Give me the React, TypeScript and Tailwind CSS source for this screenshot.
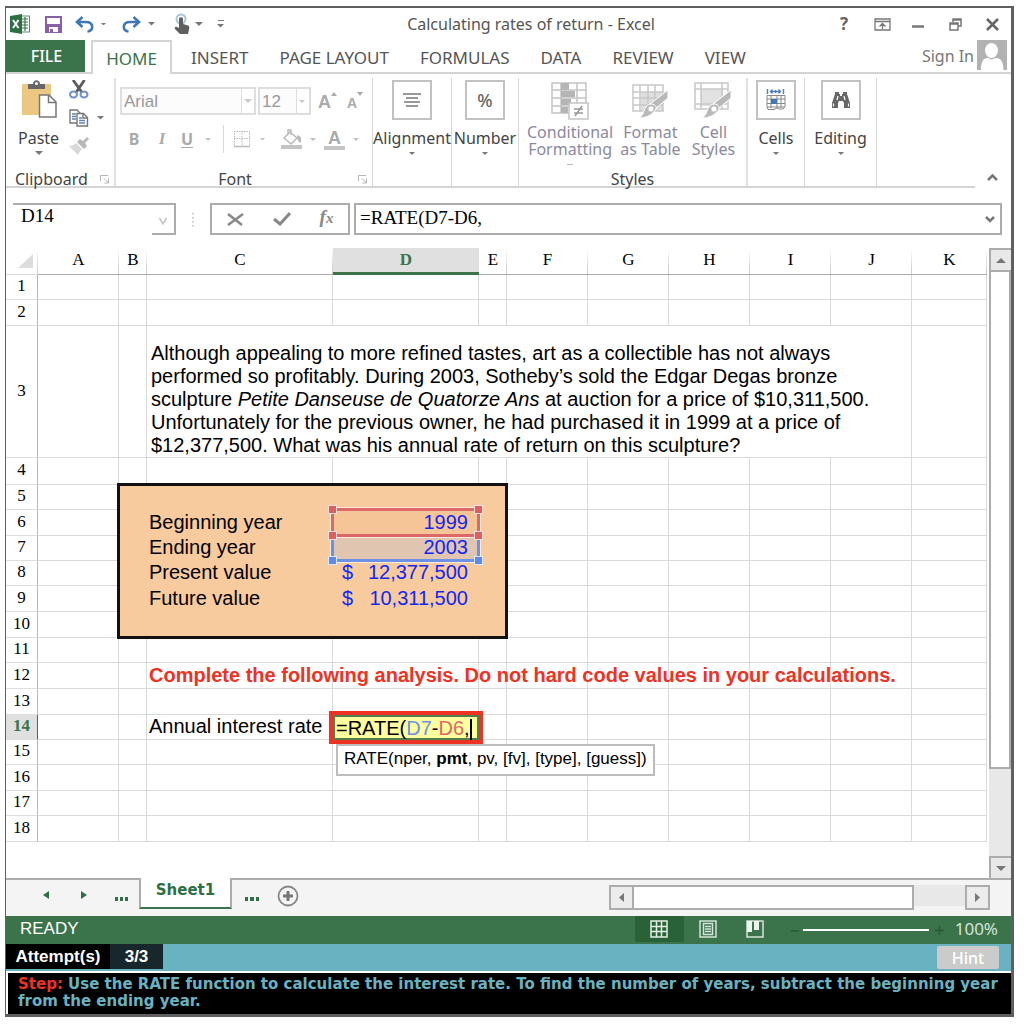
import React from 'react';

const COLUMNS = ['A', 'B', 'C', 'D', 'E', 'F', 'G', 'H', 'I', 'J', 'K'];

const TABS = ['INSERT', 'PAGE LAYOUT', 'FORMULAS', 'DATA', 'REVIEW', 'VIEW'];

// [row number, height class]
const ROWS: [number, string][] = [
  [1, 'h-[25px]'],
  [2, 'h-[26px]'],
  [3, 'h-[132px]'],
  [4, 'h-[27px]'],
  [5, 'h-[25px]'],
  [6, 'h-[26px]'],
  [7, 'h-[25px]'],
  [8, 'h-[25px]'],
  [9, 'h-[26px]'],
  [10, 'h-[26px]'],
  [11, 'h-[25px]'],
  [12, 'h-[26px]'],
  [13, 'h-[26px]'],
  [14, 'h-[25px]'],
  [15, 'h-[25px]'],
  [16, 'h-[26px]'],
  [17, 'h-[25px]'],
  [18, 'h-[26px]'],
];

const Caret = ({ className = 'text-[#777]', size = 8 }: { className?: string; size?: number }) => (
  <svg width={size} height={size / 2} viewBox="0 0 8 4" className={className} fill="currentColor">
    <path d="M0 0h8L4 4z" />
  </svg>
);

const Launcher = () => (
  <svg width="10" height="9" viewBox="0 0 10 9" fill="none" stroke="#b5b5b5">
    <path d="M.5 6V.5H8M4 3.500l4 4M8.500 3.500v4.500H4.500" />
  </svg>
);

const BrushOverlay = () => (
  <>
    <path d="M37 8v8L24 27l-5-5z" fill="#b9b9b9" stroke="#fff" />
    <path d="M20 22c5 0 7 4 3 8-4 4-9 6-15 6 3-2 4-4 5-7 1-4 4-7 7-7z" fill="#b9b9b9" stroke="#fff" />
    <circle cx="20" cy="27" r="3" fill="#fff" />
  </>
);

const TitleBar = () => (
  <div className="flex h-8 items-center pl-1 pr-3 text-[#555]">
    <svg width="20" height="20" viewBox="0 0 20 20" aria-label="Excel">
      <rect x="10" y="2" width="9.500" height="16" fill="#fff" stroke="#5b8f6b" />
      <path d="M12 5h6M12 8h6M12 11h6M12 14h6M15 3v14" stroke="#3b734b" strokeWidth="1.200" />
      <path d="M0 2l12-2v20L0 18z" fill="#2f6f44" />
      <path d="M3 6l5.500 8M8.500 6L3 14" stroke="#fff" strokeWidth="2" />
    </svg>
    <button aria-label="Save" className="ml-[15px]">
      <svg width="17" height="17" viewBox="0 0 17 17">
        <path d="M1 1h15v15H1z" fill="#fff" stroke="#8860a8" strokeWidth="2" />
        <path d="M1 8h15v8H1z" fill="#8860a8" />
        <path d="M4 11h9v5H4z" fill="#fff" />
        <path d="M5 13h3v3H5z" fill="#8860a8" />
      </svg>
    </button>
    <button aria-label="Undo" className="ml-[13px] flex items-center gap-[7px]">
      <svg width="19" height="17" viewBox="0 0 19 17" fill="none" stroke="#3f78b5" strokeWidth="2.600">
        <path d="M7.500 1L2 6l5.500 5M2.500 6H11c8 0 8 9 1.500 9.500" />
      </svg>
      <Caret size={5} />
    </button>
    <button aria-label="Redo" className="ml-4 flex items-center gap-[7px]">
      <svg width="19" height="17" viewBox="0 0 19 17" fill="none" stroke="#3f78b5" strokeWidth="2.600">
        <path d="M11.500 1L17 6l-5.500 5M16.500 6H8C0 6 0 15 6.500 15.500" />
      </svg>
      <Caret size={7} />
    </button>
    <button aria-label="Touch mode" className="ml-[19px] flex items-center gap-[5px]">
      <svg width="16" height="22" viewBox="0 0 16 22">
        <circle cx="7" cy="6" r="4.500" fill="none" stroke="#a9c3df" strokeWidth="2" />
        <path d="M5 6c0-2.500 4-2.500 4 0v5l5 1.500c1.500.5 1.500 2 1 4L14 21H6l-5-5c-1-1.500.5-2.500 2-2l2 1z" fill="#5f5f5f" />
      </svg>
      <Caret />
    </button>
    <button aria-label="Customize" className="ml-[14px] flex flex-col items-center gap-[3px]">
      <span className="h-px w-[6px] bg-[#777]" />
      <Caret size={7} />
    </button>
    <h1 className="flex-1 text-center text-[16px]">Calculating rates of return - Excel</h1>
    <div className="flex items-center gap-6">
      <button aria-label="Help" className="w-3 text-[17px] font-bold leading-5 text-[#666]">?</button>
      <button aria-label="Ribbon display" className="-mr-[3px]">
        <svg width="17" height="13" viewBox="0 0 17 13" fill="none" stroke="#777">
          <path d="M1 1h15v11H1zM1 3.500h15M8.500 11V5.500M5.500 8.500l3-3 3 3" strokeWidth="1.300" />
        </svg>
      </button>
      <button aria-label="Minimize">
        <svg width="13" height="13" viewBox="0 0 13 13"><path d="M0 8.500h12" stroke="#777" strokeWidth="2.500" /></svg>
      </button>
      <button aria-label="Restore">
        <svg width="13" height="13" viewBox="0 0 13 13" fill="none" stroke="#777" strokeWidth="1.500">
          <path d="M1 5h8v7H1zM1 6h8M4 4V1h8v7H9M4 2h8" />
        </svg>
      </button>
      <button aria-label="Close">
        <svg width="13" height="13" viewBox="0 0 13 13"><path d="M1 1l11 11M12 1L1 12" stroke="#666" strokeWidth="2.600" /></svg>
      </button>
    </div>
  </div>
);

const TabBar = () => (
  <nav className="flex h-[34px] items-stretch border-b-2 border-[#d4d4d4] text-[17px] text-[#555]">
    <button className="w-[79px] bg-[#3b734b] pl-[2px] text-[16px] font-medium text-white">FILE</button>
    <button className="relative z-10 -mb-[2px] ml-[6px] mr-[19px] w-[81px] border-2 border-b-0 border-[#d4d4d4] bg-white pt-[2px] text-[#3b734b]">HOME</button>
    <div className="flex flex-1 gap-[31px] pt-1">
      {TABS.map((tab) => (
        <button key={tab} className="whitespace-nowrap">{tab}</button>
      ))}
    </div>
    <button className="flex items-start gap-[3px] pr-1 text-[16px] text-[#777]">
      <span className="pt-1">Sign In</span>
      <svg width="30" height="30" viewBox="0 0 30 30">
        <path d="M0 0h30v30H0z" fill="#b2b2b2" />
        <ellipse cx="14.500" cy="10.500" rx="6.500" ry="7.500" fill="#fff" />
        <path d="M4 30c0-8 2-12 7-12l3.500 1.500L19 18c5 0 7.500 4 7.500 12z" fill="#fff" />
      </svg>
    </button>
  </nav>
);

const ClipboardGroup = () => (
  <section className="flex w-[110px] flex-col justify-between border-r-2 border-[#e0e0e0]">
    <div className="flex gap-[10px] pl-3">
      <button className="flex flex-col items-center">
        <svg width="36" height="40" viewBox="0 0 36 40">
          <path d="M1 6h29v31H1z" fill="#eac882" />
          <path d="M7 11V6h5c0-5 7-5 7 0h5v5z" fill="#666" />
          <circle cx="15.500" cy="5.500" r="1.500" fill="#fff" />
          <path d="M18.500 17H28l7 7v15H18.500z" fill="#fff" stroke="#777" strokeWidth="1.500" />
          <path d="M27.500 17.500V24.500H35" fill="none" stroke="#777" strokeWidth="1.500" />
        </svg>
        <span className="mt-[10px] leading-5">Paste</span>
        <span className="mt-[3px]"><Caret /></span>
      </button>
      <div className="flex flex-col gap-[10px] pt-[2px]">
        <button aria-label="Cut">
          <svg width="20" height="19" viewBox="0 0 20 19" fill="none">
            <path d="M4 0l9 12.500M15.500 0L7 12.500" stroke="#5c5c5c" strokeWidth="2.800" />
            <ellipse cx="4.500" cy="14.500" rx="3.500" ry="3" stroke="#6f94c4" strokeWidth="2" />
            <ellipse cx="15" cy="14.500" rx="3.500" ry="3" stroke="#6f94c4" strokeWidth="2" />
          </svg>
        </button>
        <button aria-label="Copy" className="flex items-center gap-2">
          <svg width="20" height="18" viewBox="0 0 20 18" fill="#fff" stroke="#777" strokeWidth="1.400">
            <path d="M1 1h7l3 3v10H1z" />
            <path d="M3 5h4M3 7.500h4M3 10h4" stroke="#5d86bd" />
            <path d="M8 4.500h6.500l4 4V17H8z" />
            <path d="M14 5v4h4" fill="none" />
            <path d="M10 9h3M10 11.500h6M10 14h6" stroke="#5d86bd" />
          </svg>
          <Caret size={7} />
        </button>
        <button aria-label="Format painter">
          <svg width="20" height="18" viewBox="0 0 20 18">
            <path d="M0 9c3 0 5-1 7-3l6 6c-2 2-3 4-4 6z" fill="#d8d8d8" />
            <path d="M8 5l3-3 3 2 4-4 2 2-4 4 2 3-3 3z" fill="#b8b8b8" />
          </svg>
        </button>
      </div>
    </div>
    <div className="flex items-center justify-between pl-[9px] pr-1 leading-[14px]">
      <span>Clipboard</span>
      <Launcher />
    </div>
  </section>
);

const FontGroup = () => (
  <section className="flex w-[257px] flex-col border-r border-[#d8d8d8] pl-1 text-[#aaa]">
    <div className="mt-[9px] flex h-[28px] gap-[2px]">
      <div className="relative w-[136px] border-2 border-[#dedede] bg-[#fcfcfc]">
        <select aria-label="Font name" className="h-full w-full appearance-none px-[2px] pb-1 font-['Liberation_Sans',sans-serif] text-[17px] text-[#999]">
          <option>Arial</option>
        </select>
        <span className="pointer-events-none absolute inset-y-0 right-0 flex w-[13px] items-center border-l border-[#dedede] bg-white pl-[2px]"><Caret className="text-[#c8c8c8]" /></span>
      </div>
      <div className="relative w-[53px] border-2 border-[#dedede] bg-[#fcfcfc]">
        <select aria-label="Font size" className="h-full w-full appearance-none px-[2px] pb-1 font-['Liberation_Sans',sans-serif] text-[17px] text-[#999]">
          <option>12</option>
        </select>
        <span className="pointer-events-none absolute inset-y-0 right-0 flex w-[13px] items-center border-l border-[#dedede] bg-white pl-[2px]"><Caret className="text-[#c8c8c8]" size={6} /></span>
      </div>
      <button aria-label="Grow font" className="ml-[5px] flex items-start">
        <span className="pt-[5px] font-['Liberation_Sans',sans-serif] text-[18px] font-bold leading-5">A</span>
        <svg width="6" height="12" viewBox="0 0 6 12"><path d="M0 9l3-4 3 4z" fill="#aaa" /></svg>
      </button>
      <button aria-label="Shrink font" className="ml-2 flex items-start">
        <span className="pt-[6px] font-['Liberation_Sans',sans-serif] text-[14px] font-bold leading-5">A</span>
        <svg width="6" height="12" viewBox="0 0 6 12"><path d="M0 5h6L3 9z" fill="#aaa" /></svg>
      </button>
    </div>
    <div className="mt-[10px] flex h-7 items-center pl-[6px]">
      <button aria-label="Bold" className="w-4 text-[16px] font-bold">B</button>
      <button aria-label="Italic" className="ml-3 w-4 font-['Liberation_Serif',serif] text-[17px] font-bold italic">I</button>
      <button aria-label="Underline" className="ml-[11px] flex items-center gap-3">
        <span className="border-b border-[#aaa] text-[16px] font-bold leading-4">U</span>
        <Caret className="text-[#c0c0c0]" size={6} />
      </button>
      <span className="ml-3 h-7 w-px bg-[#dadada]" />
      <button aria-label="Borders" className="ml-[10px] flex items-center gap-[10px]">
        <svg width="16" height="18" viewBox="0 0 16 18" fill="none" stroke="#bbb">
          <path d="M.5 1v14M15.500 1v14M8 1v14M0 1.500h16M0 8.500h16" strokeDasharray="1.500 1" />
          <path d="M0 16.500h16" strokeWidth="1.500" />
        </svg>
        <Caret className="text-[#c0c0c0]" size={5} />
      </button>
      <button aria-label="Fill color" className="ml-4 flex items-center gap-2">
        <svg width="21" height="20" viewBox="0 0 21 20" fill="none" stroke="#bbb" strokeWidth="1.500">
          <path d="M9 3l7 6-6 6-7-6zM7 6V1h3v5" />
          <path d="M16 6l4 2v6c-3-1-3-3-4-5z" fill="#bbb" stroke="none" />
          <path d="M0 18h21" strokeWidth="4" stroke="#c4c4c4" />
        </svg>
        <Caret className="text-[#c0c0c0]" size={6} />
      </button>
      <button aria-label="Font color" className="ml-2 flex items-center gap-2">
        <span className="flex w-[21px] justify-center border-b-4 border-[#c4c4c4] pt-[2px] font-['Liberation_Sans',sans-serif] text-[18px] font-bold leading-4">A</span>
        <Caret className="text-[#c0c0c0]" size={6} />
      </button>
    </div>
    <div className="mt-auto flex items-center pr-1 leading-[14px] text-[#444]">
      <span className="flex-1 pr-2 text-center">Font</span>
      <Launcher />
    </div>
  </section>
);

const MenuGroup = ({ label, className, children }: { label: string; className: string; children: React.ReactNode }) => (
  <section className={`flex justify-center border-r border-[#d8d8d8] pt-[2px] ${className}`}>
    <button className="flex flex-col items-center">
      <span className="flex h-10 w-10 items-center justify-center border-2 border-[#c2c2c2]">{children}</span>
      <span className="mt-2 leading-5">{label}</span>
      <span className="mt-1"><Caret size={6} /></span>
    </button>
  </section>
);

const StylesGroup = () => (
  <section className="flex w-[229px] flex-col border-r-2 border-[#e0e0e0] pt-1 text-[#8c89a0]">
    <div className="flex items-start gap-[7px] pl-2 leading-[17px]">
      <button className="flex flex-col items-center">
        <svg width="38" height="38" viewBox="0 0 38 38" fill="none" stroke="#c4c4c4">
          <path d="M1 1h34v30H1zM1 8h34M1 16h34M1 24h34M10 1v30M26 1v30" strokeWidth="1.500" />
          <path d="M10 1h8v7h-8zM10 9h14v6H10zM10 17h10v6H10zM10 25h7v6h-7z" fill="#b5b5b5" stroke="none" />
          <path d="M18 21h19v16H18z" fill="#fff" strokeWidth="1.500" />
          <path d="M23 27h9M23 31h9M31 24l-7 10" stroke="#999" strokeWidth="1.500" />
        </svg>
        <span className="mt-1">Conditional<br />Formatting</span>
        <span className="mt-[6px] h-px w-[6px] bg-[#bbb]" />
      </button>
      <button className="flex flex-col items-center">
        <svg width="38" height="38" viewBox="0 0 38 38" fill="none" stroke="#c8c8c8">
          <path d="M10 10h22v19H10z" fill="#dedede" stroke="none" />
          <path d="M2 3h30v26H2zM2 10h30M2 16h30M2 23h30M9 3v26M17 3v26M24 3v26" strokeWidth="1.500" />
          <BrushOverlay />
        </svg>
        <span className="mt-1">Format<br />as Table</span>
      </button>
      <button className="ml-1 flex flex-col items-center">
        <svg width="38" height="38" viewBox="0 0 38 38" fill="none" stroke="#c8c8c8">
          <path d="M7 7h22v17H7z" fill="#e2e2e2" stroke="none" />
          <path d="M1 1h33v26H1zM1 7h33M1 22h33M7 1v26M28 1v26" strokeWidth="1.500" />
          <BrushOverlay />
        </svg>
        <span className="mt-1">Cell<br />Styles</span>
      </button>
    </div>
    <span className="mt-auto text-center leading-[14px] text-[#444]">Styles</span>
  </section>
);

const Ribbon = () => (
  <div className="flex h-[114px] items-stretch text-[16px] text-[#444]">
    <div className="flex flex-1 border-b-2 border-[#d4d4d4] pt-1">
      <ClipboardGroup />
      <FontGroup />
      <MenuGroup label="Alignment" className="w-[79px]">
        <svg width="18" height="14" viewBox="0 0 18 14" stroke="#777" strokeWidth="1.300">
          <path d="M0 1h18M3 5h12M1 9h16M3 13h12" />
        </svg>
      </MenuGroup>
      <MenuGroup label="Number" className="w-[67px]">
        <span className="text-[18px] font-medium text-[#666]">%</span>
      </MenuGroup>
      <StylesGroup />
      <MenuGroup label="Cells" className="w-[57px]">
        <svg width="20" height="22" viewBox="0 0 20 22" fill="none">
          <path d="M1.500 0v5M17.500 0v5M4 2.500h11M6.500.5l-2 2 2 2M12.500.5l2 2-2 2M9.500 1v3" stroke="#4a7fbd" strokeWidth="1.400" />
          <path d="M1 6.500h18v11l-2 2.500h-4l-2-1-3 1.500H2L1 18zM1 10h18M1 14.500h18M1 18h18M5 7v12M11 7v12M15 7v12" stroke="#888" />
          <path d="M5 10h6v5H5z" fill="#3f78b5" />
        </svg>
      </MenuGroup>
      <MenuGroup label="Editing" className="w-[72px]">
        <svg width="20" height="18" viewBox="0 0 20 18">
          <path d="M4 1h4v2h1v2h2V3h1V1h4v2l1 3 2 6v5h-6v-5l-1-2h-4l-1 2v5H1v-5l2-6 1-3z" fill="#666" />
          <path d="M2.500 12.500v3M17.500 12.500v3M7 5l-1 4M13 5l1 4" stroke="#fff" strokeWidth="1.200" />
        </svg>
      </MenuGroup>
    </div>
    <button aria-label="Collapse ribbon" className="flex w-9 items-end justify-center pb-[7px] pr-[2px]">
      <svg width="11" height="7" viewBox="0 0 11 7" fill="none" stroke="#777" strokeWidth="2.500"><path d="M1 6l4.500-4.500L10 6" /></svg>
    </button>
  </div>
);

const FormulaBar = () => (
  <div className="flex h-[60px] items-start pl-[7px] pr-[9px] pt-[15px] font-['Liberation_Serif',serif] text-[19px] text-black">
    <div className="flex h-8 w-[163px] border-r-2 border-t-2 border-[#acacac]">
      <input aria-label="Name box" defaultValue="D14" className="h-[22px] min-w-0 flex-1 pl-2 outline-none" />
      <button aria-label="Names" className="flex w-[22px] items-center justify-center border-b-2 border-[#acacac] pt-1">
        <svg width="8" height="8" viewBox="0 0 8 8" fill="none" stroke="#c4c4c4" strokeWidth="1.500"><path d="M.5 1L4 7l3.500-6" /></svg>
      </button>
    </div>
    <svg width="4" height="32" viewBox="0 0 4 32" className="mx-[15px]" stroke="#bbb" strokeWidth="1.500"><path d="M2 10v14" strokeDasharray="1.500 2.500" /></svg>
    <div className="flex h-8 w-[140px] items-center justify-around border-2 border-[#acacac]">
      <button aria-label="Cancel">
        <svg width="17" height="13" viewBox="0 0 17 13" stroke="#888" strokeWidth="2.500"><path d="M1 1l14 11M16 1L1 12" /></svg>
      </button>
      <button aria-label="Enter">
        <svg width="18" height="14" viewBox="0 0 18 14" fill="none" stroke="#888" strokeWidth="3"><path d="M1 7l6 5L17 1" /></svg>
      </button>
      <button aria-label="Insert function" className="pb-1 text-[19px] font-bold italic leading-6 text-[#888]">f<span className="text-[15px]">x</span></button>
    </div>
    <div className="ml-1 flex h-8 flex-1 items-center border-2 border-[#acacac]">
      <input aria-label="Formula" defaultValue="=RATE(D7-D6," className="min-w-0 flex-1 pb-[2px] pl-1 outline-none" />
      <button aria-label="Expand formula bar" className="pr-[5px]">
        <svg width="10" height="7" viewBox="0 0 10 7" fill="none" stroke="#777" strokeWidth="2.500"><path d="M1 1l4 4 4-4" /></svg>
      </button>
    </div>
  </div>
);

const Handle = ({ className }: { className: string }) => (
  <span className={`absolute h-[9px] w-[9px] border border-white/80 ${className}`} />
);

const Money = ({ value }: { value: string }) => (
  <div className="flex justify-between pl-[9px] pr-[10px] text-[#1226f5]">
    <span>$</span>
    <span>{value}</span>
  </div>
);

const CELLS: Record<string, React.ReactNode> = {
  B5: <div className="pointer-events-none absolute -left-[2px] -top-[2px] z-10 h-[156px] w-[391px] border-[3px] border-[#111]" />,
  C6: 'Beginning year',
  C7: 'Ending year',
  C8: 'Present value',
  C9: 'Future value',
  D6: (
    <>
      <div className="absolute -left-[2px] -top-[2px] bottom-[-2px] right-[-2px] z-30 border-[3px] border-[#dd6868] bg-[#ee8866]/10 outline-1 outline-white/60">
        <Handle className="-left-[6px] -top-[6px] bg-[#dd5f5f]" />
        <Handle className="-right-[6px] -top-[6px] bg-[#dd5f5f]" />
        <Handle className="-bottom-[6px] -left-[6px] bg-[#dd5f5f]" />
        <Handle className="-bottom-[6px] -right-[6px] bg-[#dd5f5f]" />
      </div>
      <div className="relative z-40 pr-[10px] text-right text-[#1226f5]">1999</div>
    </>
  ),
  D7: (
    <>
      <div className="absolute -left-[2px] top-0 bottom-[-2px] right-[-2px] z-20 border-[3px] border-t-0 border-[#6b92e8] bg-[#9ab8e8]/25 outline-1 outline-white/60">
        <Handle className="-bottom-[6px] -left-[6px] bg-[#5f8ae8]" />
        <Handle className="-bottom-[6px] -right-[6px] bg-[#5f8ae8]" />
      </div>
      <div className="relative z-40 pr-[10px] text-right text-[#1226f5]">2003</div>
    </>
  ),
  D8: <Money value="12,377,500" />,
  D9: <Money value="10,311,500" />,
  C12: <strong className="relative z-10 whitespace-nowrap text-[#ee3224]">Complete the following analysis. Do not hard code values in your calculations.</strong>,
  C14: 'Annual interest rate',
  D14: (
    <>
      <div className="absolute -left-[4px] -top-[4px] z-20 flex h-[33px] w-[154px] items-center border-4 border-[#ee3224]">
        <div className="h-full w-full whitespace-nowrap border-2 border-[#4d7f4f] bg-[#ffff9e] pl-[1px] leading-[22px]">
          =RATE(<span className="text-[#6b92e8]">D7</span>-<span className="text-[#dd6868]">D6</span>,<span className="inline-block h-[21px] w-[2px] bg-black align-middle" />
        </div>
      </div>
      <div className="absolute left-[3px] top-[29px] z-20 flex h-8 items-center whitespace-nowrap border-2 border-[#bdbdbd] bg-white px-[6px] pb-[2px] text-[17px]">
        <span>RATE(nper, <b>pmt</b>, pv, [fv], [type], [guess])</span>
      </div>
    </>
  ),
};

const Sheet = () => (
  <table className="w-full table-fixed border-separate border-spacing-0 font-['Liberation_Sans',sans-serif] text-[20px] leading-[22px] text-black">
    <colgroup>
      <col className="w-[32px]" />
      <col className="w-[81px]" />
      <col className="w-[28px]" />
      <col className="w-[186px]" />
      <col className="w-[146px]" />
      <col className="w-[28px]" />
      <col className="w-[81px]" />
      <col className="w-[81px]" />
      <col className="w-[81px]" />
      <col className="w-[81px]" />
      <col className="w-[81px]" />
      <col />
    </colgroup>
    <thead className="font-['Liberation_Serif',serif] text-[17px] leading-5">
      <tr className="h-[27px]">
        <th className="border-b border-[#ddd] bg-[linear-gradient(to_bottom,#fff,#c8c8c8)] bg-[length:1px_100%] bg-right bg-no-repeat p-0">
          <svg width="15" height="14" viewBox="0 0 15 14" className="ml-3"><path d="M15 0v14H0z" fill="#dcdcdc" /></svg>
        </th>
        {COLUMNS.map((col) =>
          col === 'D' ? (
            <th key={col} className="border-b-[3px] border-[#3b734b] bg-[#e0e0e0] p-0 font-bold text-[#3b734b]">{col}</th>
          ) : (
            <th key={col} className="border-b border-[#ababab] bg-[linear-gradient(to_bottom,#fff,#c8c8c8)] bg-[length:1px_100%] bg-right bg-no-repeat p-0 pb-[2px] font-medium">{col}</th>
          )
        )}
      </tr>
    </thead>
    <tbody>
      {ROWS.map(([row, height]) => (
        <tr key={row} className={height}>
          <th
            scope="row"
            className={`border-b border-r border-b-[#dedede] p-0 pb-[2px] text-center font-['Liberation_Serif',serif] text-[17px] leading-5 ${
              row === 14 ? 'border-r-[#3b734b] bg-[#e0e0e0] font-bold text-[#3b734b]' : 'border-r-[#b8b8b8] font-normal'
            }`}
          >
            {row}
          </th>
          {COLUMNS.map((col) => {
            if (row === 3 && col === 'C') {
              return (
                <td key={col} colSpan={8} className="border-b border-r border-[#dadada] p-0 pl-1 align-bottom leading-[23px]">
                  Although appealing to more refined tastes, art as a collectible has not always<br />
                  performed so profitably. During 2003, Sotheby’s sold the Edgar Degas bronze<br />
                  sculpture <em>Petite Danseuse de Quatorze Ans</em> at auction for a price of $10,311,500.<br />
                  Unfortunately for the previous owner, he had purchased it in 1999 at a price of<br />
                  $12,377,500. What was his annual rate of return on this sculpture?
                </td>
              );
            }
            if (row === 3 && 'DEFGHIJ'.includes(col)) return null;
            const shaded = row >= 5 && row <= 10 && 'BCDE'.includes(col);
            return (
              <td
                key={col}
                className={`relative border-b border-r p-0 pb-[2px] ${col === 'C' ? 'pl-[2px]' : ''} ${
                  shaded ? 'border-[#f7cb9e] bg-[#f7cb9e]' : 'border-[#dadada]'
                }`}
              >
                {CELLS[`${col}${row}`]}
              </td>
            );
          })}
        </tr>
      ))}
    </tbody>
  </table>
);

const VerticalScroll = () => (
  <div className="ml-[2px] flex w-[22px] flex-col bg-[#e8e8e8]">
    <button aria-label="Scroll up" className="flex h-6 items-center justify-center border-2 border-r-0 border-[#acacac]"><Caret size={10} className="rotate-180 text-[#777]" /></button>
    <div className="h-[497px] border-2 border-t-0 border-[#acacac] bg-white" />
    <button aria-label="Scroll down" className="mt-auto flex h-[22px] items-center justify-center border-2 border-b-0 border-r-0 border-[#acacac]"><Caret size={10} /></button>
  </div>
);

const SheetTabs = () => (
  <div className="flex h-[38px] items-start border-t-2 border-[#acacac] bg-[#f4f4f4] pr-[21px] text-[#2f6f44]">
    <button aria-label="Previous sheet" className="ml-[37px] mt-[11px]"><svg width="6" height="8" viewBox="0 0 6 8"><path d="M6 0v8L0 4z" fill="#2f6f44" /></svg></button>
    <button aria-label="Next sheet" className="ml-8 mt-[11px]"><svg width="6" height="8" viewBox="0 0 6 8"><path d="M0 0v8l6-4z" fill="#2f6f44" /></svg></button>
    <button aria-label="More sheets" className="ml-7 mt-[17px]"><svg width="13" height="4" viewBox="0 0 13 4"><path d="M0 0h3v4H0zM5 0h3v4H5zM10 0h3v4h-3z" fill="#2f6f44" /></svg></button>
    <button className="-mt-[2px] ml-[11px] h-[31px] w-[93px] border-x-2 border-b-2 border-x-[#acacac] border-b-[#3b734b] bg-white pb-1 font-['DejaVu_Sans',sans-serif] text-[15px] font-bold">Sheet1</button>
    <button aria-label="More tabs" className="ml-[13px] mt-[17px]"><svg width="14" height="4" viewBox="0 0 14 4"><path d="M0 0h3v4H0zM5 0h4v4H5zM11 0h3v4h-3z" fill="#2f6f44" /></svg></button>
    <button aria-label="New sheet" className="ml-[18px] mt-[5px]">
      <svg width="22" height="22" viewBox="0 0 22 22" fill="none" stroke="#888"><circle cx="11" cy="11" r="9.500" strokeWidth="1.800" /><path d="M11 6v10M6 11h10" strokeWidth="3" stroke="#777" /></svg>
    </button>
    <div className="ml-auto mt-[5px] flex h-[25px] w-[381px]">
      <button aria-label="Scroll left" className="flex w-[25px] items-center justify-center border-2 border-[#acacac] bg-[#ececec]"><svg width="5" height="9" viewBox="0 0 5 9"><path d="M5 0v9L0 4.500z" fill="#777" /></svg></button>
      <div className="flex-1 border-2 border-l-0 border-[#acacac] bg-white" />
      <div className="mb-1 w-[51px] bg-[#e8e8e8]" />
      <button aria-label="Scroll right" className="flex w-[25px] items-center justify-center border-2 border-[#acacac] bg-[#ececec]"><svg width="5" height="9" viewBox="0 0 5 9"><path d="M0 0v9l5-4.500z" fill="#777" /></svg></button>
    </div>
  </div>
);

const StatusBar = () => (
  <div className="flex h-7 items-center bg-[#3b734b] pr-[13px] text-white">
    <span className="flex-1 pb-[2px] pl-[14px] font-['Liberation_Sans',sans-serif] text-[17px]">READY</span>
    <button aria-label="Normal view" className="flex h-[26px] w-[49px] items-center justify-center self-start bg-[#2a6238]">
      <svg width="18" height="18" viewBox="0 0 18 18" fill="none" stroke="#e3efe5" strokeWidth="1.500"><path d="M1 1h16v16H1zM1 6.500h16M1 11.500h16M6.500 1v16M11.500 1v16" /></svg>
    </button>
    <button aria-label="Page layout view" className="ml-[15px] pb-[2px]">
      <svg width="18" height="18" viewBox="0 0 18 18" fill="none" stroke="#d5e4d8" strokeWidth="1.500"><path d="M1 1h16v16H1zM4.500 3.500h9v11h-9zM6 6.500h6M6 9h6M6 11.500h6" /></svg>
    </button>
    <button aria-label="Page break view" className="ml-[29px] mr-[27px] pb-[2px]">
      <svg width="18" height="18" viewBox="0 0 18 18" fill="none" stroke="#d5e4d8" strokeWidth="1.500"><path d="M1 1h16v16H1z" /><path d="M1 1h5v11H1zM8 1h5v9H8z" fill="#eef5ef" stroke="none" /></svg>
    </button>
    <button aria-label="Zoom out" className="mr-1"><svg width="8" height="9" viewBox="0 0 8 9"><path d="M0 5h8" stroke="#2a5736" strokeWidth="1.500" /></svg></button>
    <input type="range" aria-label="Zoom" className="h-[2px] w-[126px] appearance-none bg-white [&::-webkit-slider-thumb]:w-0 [&::-webkit-slider-thumb]:appearance-none" />
    <button aria-label="Zoom in" className="ml-[6px] mr-[11px]"><svg width="9" height="9" viewBox="0 0 9 9"><path d="M0 4.500h9M4.500 0v9" stroke="#2a5736" strokeWidth="1.500" /></svg></button>
    <span className="pb-[2px] text-[17px] text-[#d5e4d8]">100%</span>
  </div>
);

export default function App() {
  return (
    <div className="min-h-screen bg-white pb-2 pl-[5px] pr-[10px] pt-[6px] font-['Noto_Sans',sans-serif]">
      <main className="border-2 border-b-[3px] border-l border-r-[3px] border-[#5f5f5f] bg-white">
        <TitleBar />
        <TabBar />
        <Ribbon />
        <FormulaBar />
        <div className="flex">
          <div className="min-w-0 flex-1 pb-9">
            <Sheet />
          </div>
          <VerticalScroll />
        </div>
        <SheetTabs />
        <StatusBar />
        <div className="flex h-[27px] bg-[#69b2c2] pr-3 font-['Liberation_Sans',sans-serif] text-[17px] font-bold text-white">
          <span className="flex h-[25px] w-[104px] items-center justify-center bg-black">Attempt(s)</span>
          <span className="flex h-[25px] w-[53px] items-center justify-center bg-[#17272c]">3/3</span>
          <button className="ml-auto mt-[2px] h-[23px] w-[62px] rounded-xs bg-[#cbcbcb] font-['Noto_Sans',sans-serif] text-[16px] font-medium leading-[22px]">Hint</button>
        </div>
        <p className="border-l-2 border-t-2 border-white bg-black pb-1 pl-[10px] pt-[3px] font-['DejaVu_Sans',sans-serif] text-[15px] font-bold leading-[17px] text-[#69b2c2]">
          <span className="text-[#ee3224]">Step:</span> Use the RATE function to calculate the interest rate. To find the number of years, subtract the beginning year from the ending year.
        </p>
      </main>
    </div>
  );
}
